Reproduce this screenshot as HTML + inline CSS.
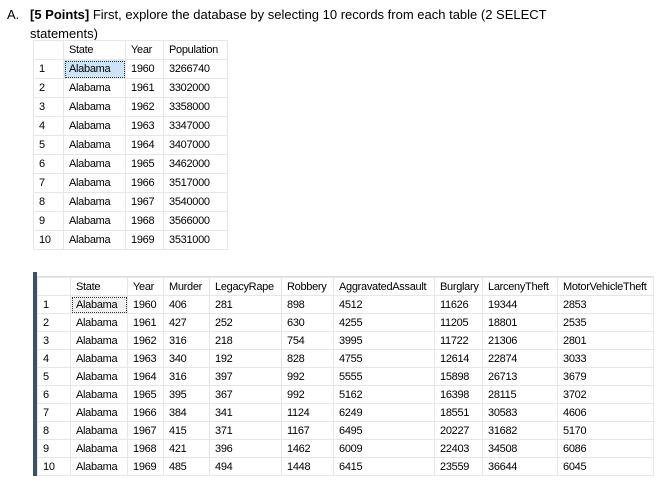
<!DOCTYPE html>
<html><head><style>
body{margin:0;width:664px;height:485px;background:#fff;font-family:"Liberation Sans",sans-serif;position:relative;overflow:hidden}
.q{position:absolute;left:7px;top:5px;font-size:13px;color:#000;line-height:19px}
table{position:absolute;border-collapse:collapse;font-size:11px;color:#000;letter-spacing:-0.3px;table-layout:fixed}
td{border:1px solid #e6e6e6;padding:0 0 0 5px;white-space:nowrap;overflow:hidden}
.t1 td{height:18px}
.t2 td{height:17px}
.sel{background:#cce4f7;outline:1px dotted #333;outline-offset:-2px}
.sel2{background:#f0f0f0;outline:1px dotted #333;outline-offset:-2px}
.bar{position:absolute;left:33px;top:272px;width:4px;height:204px;background:#3a4f74}
.line{position:absolute;left:37px;top:276px;width:617px;height:1px;background:#ddd}
</style></head><body>
<div class="q"><span style="display:inline-block;width:23px">A.</span><b>[5 Points]</b> First, explore the database by selecting 10 records from each table (2 SELECT<br><span style="padding-left:23px">statements)</span></div>
<table class="t1" style="left:33px;top:40px;width:194px">
<colgroup><col style="width:30px"><col style="width:62px"><col style="width:38px"><col style="width:64px"></colgroup>
<tr><td></td><td>State</td><td>Year</td><td>Population</td></tr>
<tr><td>1</td><td class="sel">Alabama</td><td>1960</td><td>3266740</td></tr>
<tr><td>2</td><td>Alabama</td><td>1961</td><td>3302000</td></tr>
<tr><td>3</td><td>Alabama</td><td>1962</td><td>3358000</td></tr>
<tr><td>4</td><td>Alabama</td><td>1963</td><td>3347000</td></tr>
<tr><td>5</td><td>Alabama</td><td>1964</td><td>3407000</td></tr>
<tr><td>6</td><td>Alabama</td><td>1965</td><td>3462000</td></tr>
<tr><td>7</td><td>Alabama</td><td>1966</td><td>3517000</td></tr>
<tr><td>8</td><td>Alabama</td><td>1967</td><td>3540000</td></tr>
<tr><td>9</td><td>Alabama</td><td>1968</td><td>3566000</td></tr>
<tr><td>10</td><td>Alabama</td><td>1969</td><td>3531000</td></tr>
</table>
<div class="bar"></div><div class="line"></div>
<table class="t2" style="left:37px;top:277px;width:616px">
<colgroup><col style="width:33px"><col style="width:57px"><col style="width:36px"><col style="width:46px"><col style="width:72px"><col style="width:52px"><col style="width:101px"><col style="width:48px"><col style="width:75px"><col style="width:96px"></colgroup>
<tr><td></td><td>State</td><td>Year</td><td>Murder</td><td>LegacyRape</td><td>Robbery</td><td>AggravatedAssault</td><td>Burglary</td><td>LarcenyTheft</td><td>MotorVehicleTheft</td></tr>
<tr><td>1</td><td class="sel2">Alabama</td><td>1960</td><td>406</td><td>281</td><td>898</td><td>4512</td><td>11626</td><td>19344</td><td>2853</td></tr>
<tr><td>2</td><td>Alabama</td><td>1961</td><td>427</td><td>252</td><td>630</td><td>4255</td><td>11205</td><td>18801</td><td>2535</td></tr>
<tr><td>3</td><td>Alabama</td><td>1962</td><td>316</td><td>218</td><td>754</td><td>3995</td><td>11722</td><td>21306</td><td>2801</td></tr>
<tr><td>4</td><td>Alabama</td><td>1963</td><td>340</td><td>192</td><td>828</td><td>4755</td><td>12614</td><td>22874</td><td>3033</td></tr>
<tr><td>5</td><td>Alabama</td><td>1964</td><td>316</td><td>397</td><td>992</td><td>5555</td><td>15898</td><td>26713</td><td>3679</td></tr>
<tr><td>6</td><td>Alabama</td><td>1965</td><td>395</td><td>367</td><td>992</td><td>5162</td><td>16398</td><td>28115</td><td>3702</td></tr>
<tr><td>7</td><td>Alabama</td><td>1966</td><td>384</td><td>341</td><td>1124</td><td>6249</td><td>18551</td><td>30583</td><td>4606</td></tr>
<tr><td>8</td><td>Alabama</td><td>1967</td><td>415</td><td>371</td><td>1167</td><td>6495</td><td>20227</td><td>31682</td><td>5170</td></tr>
<tr><td>9</td><td>Alabama</td><td>1968</td><td>421</td><td>396</td><td>1462</td><td>6009</td><td>22403</td><td>34508</td><td>6086</td></tr>
<tr><td>10</td><td>Alabama</td><td>1969</td><td>485</td><td>494</td><td>1448</td><td>6415</td><td>23559</td><td>36644</td><td>6045</td></tr>
</table>
</body></html>
